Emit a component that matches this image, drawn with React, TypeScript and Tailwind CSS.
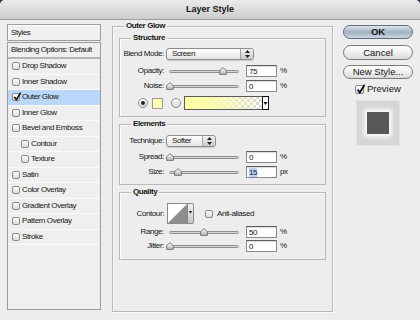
import clsx from "clsx";

type StyleItem = { label: string; checked?: boolean; active?: boolean; indent?: boolean };

const styleItems: StyleItem[] = [
  { label: "Drop Shadow" },
  { label: "Inner Shadow" },
  { label: "Outer Glow", checked: true, active: true },
  { label: "Inner Glow" },
  { label: "Bevel and Emboss" },
  { label: "Contour", indent: true },
  { label: "Texture", indent: true },
  { label: "Satin" },
  { label: "Color Overlay" },
  { label: "Gradient Overlay" },
  { label: "Pattern Overlay" },
  { label: "Stroke" },
];

function CheckBox({ checked, size = 8, className }: { checked?: boolean; size?: number; className?: string }) {
  return (
    <span
      className={clsx(
        "relative shrink-0 rounded-[2px] border border-[#8a8a8a] bg-gradient-to-b from-white to-[#dcdcdc]",
        className
      )}
      style={{ width: size, height: size }}
    >
      {checked && (
        <svg className="absolute left-[0px] top-[-2px]" width={size} height={size + 1} viewBox="0 0 10 11">
          <path d="M1.8 6.2 L4.2 9.4 L9.6 0.8" fill="none" stroke="#111" strokeWidth="2" />
        </svg>
      )}
    </span>
  );
}

function StylesPanel() {
  return (
    <div className="mt-[4px] w-[94px] h-[286px] flex flex-col text-[8px] tracking-[-0.4px]">
      <div className="h-[17px] flex items-center pl-[3px] border border-[#9d9d9d] bg-[#f0f0f0] shadow-[inset_1px_1px_0_#fff]">
        Styles
      </div>
      <div className="mt-[1px] flex-1 flex flex-col border border-[#9d9d9d] bg-[#efefef]">
        <div className="h-[16px] flex items-center pl-[3px] border-b-2 border-[#b4b4b4]">Blending Options: Default</div>
        {styleItems.map((s) => (
          <div
            key={s.label}
            className={clsx(
              "h-[15.5px] flex items-center border-b border-[#fafafa]",
              s.indent ? "pl-[13px]" : "pl-[4px]",
              s.active && "bg-[#bad6f8]"
            )}
          >
            <CheckBox checked={s.checked} />
            <span className="ml-[2px]">{s.label}</span>
          </div>
        ))}
      </div>
    </div>
  );
}

function Legend({ children }: { children: string }) {
  return <legend className="ml-[11px] px-[2px] h-[10px] leading-[10px] font-bold text-[8px] tracking-[-0.4px]">{children}</legend>;
}

function Select({ value, width }: { value: string; width: number }) {
  return (
    <div
      className="ml-[2px] h-[12px] flex items-stretch rounded-[3px] border border-[#8d8d8d] bg-gradient-to-b from-white to-[#e4e4e4] shadow-[0_1px_1px_rgba(0,0,0,0.15)]"
      style={{ width }}
    >
      <span className="flex-1 pl-[5px] leading-[10px]">{value}</span>
      <span className="w-[13px] flex items-center justify-center border-l border-[#a5a5a5] rounded-r-[3px] bg-gradient-to-b from-[#f4f4f4] to-[#c9c9c9]">
        <svg width="5" height="8" viewBox="0 0 5 8">
          <path d="M2.5 0 L5 3 H0Z M2.5 8 L5 5 H0Z" fill="#222" />
        </svg>
      </span>
    </div>
  );
}

function Slider({ thumb }: { thumb: number }) {
  return (
    <div className="relative ml-[5px] w-[70px] h-[12px] flex items-center">
      <div className="w-full h-[3px] rounded-full border border-[#8e8e8e] bg-gradient-to-b from-[#bdbdbd] to-[#f2f2f2]" />
      <svg className="absolute top-[2px]" style={{ left: thumb }} width="8" height="8" viewBox="0 0 8 8">
        <defs>
          <linearGradient id="thumbGrad" x1="0" y1="0" x2="0" y2="1">
            <stop offset="0" stopColor="#fdfdfd" />
            <stop offset="1" stopColor="#b4b4b4" />
          </linearGradient>
        </defs>
        <path d="M4 0.6 L7.4 3.6 V7.4 H0.6 V3.6 Z" fill="url(#thumbGrad)" stroke="#6e6e6e" strokeWidth="0.9" strokeLinejoin="round" />
      </svg>
    </div>
  );
}

function Field({ value, selected }: { value: string; selected?: boolean }) {
  return (
    <div className="ml-[7px] w-[31px] h-[12px] flex items-center pl-[2px] bg-white border border-[#8a8a8a] border-t-[#5e5e5e] shadow-[inset_0_1px_1px_rgba(0,0,0,0.15)]">
      <span className={clsx("leading-[9px]", selected && "bg-[#b5d5fd]")}>{value}</span>
    </div>
  );
}

function SliderRow({ label, value, unit, thumb, selected, className }: { label: string; value: string; unit: string; thumb: number; selected?: boolean; className?: string }) {
  return (
    <div className={clsx("h-[12px] flex items-center", className)}>
      <span className="w-[44px] text-right">{label}</span>
      <Slider thumb={thumb} />
      <Field value={value} selected={selected} />
      <span className="ml-[3px]">{unit}</span>
    </div>
  );
}

function Radio({ on, className }: { on?: boolean; className?: string }) {
  return (
    <span className={clsx("w-[10px] h-[10px] shrink-0 rounded-full border border-[#8a8a8a] bg-gradient-to-b from-white to-[#d8d8d8] flex items-center justify-center", className)}>
      {on && <span className="w-[4px] h-[4px] rounded-full bg-[#1e1e1e]" />}
    </span>
  );
}

function GradientBar() {
  return (
    <svg className="ml-[3px]" width="85" height="14" viewBox="0 0 85 14">
      <defs>
        <pattern id="chk" width="6" height="6" patternUnits="userSpaceOnUse">
          <rect width="6" height="6" fill="#fff" />
          <rect width="3" height="3" fill="#d9d9d9" />
          <rect x="3" y="3" width="3" height="3" fill="#d9d9d9" />
        </pattern>
        <linearGradient id="yel" x1="0" y1="0" x2="1" y2="0">
          <stop offset="0" stopColor="#ffffa4" />
          <stop offset="0.35" stopColor="#ffffa4" stopOpacity="0.85" />
          <stop offset="1" stopColor="#ffffa4" stopOpacity="0" />
        </linearGradient>
      </defs>
      <rect x="0.5" y="0.5" width="78" height="13" fill="url(#chk)" />
      <rect x="0.5" y="0.5" width="78" height="13" fill="url(#yel)" stroke="#5a5a5a" />
      <rect x="78.5" y="0.5" width="6" height="13" fill="#fff" stroke="#111" />
      <path d="M79.5 6 H83.5 L81.5 9 Z" fill="#111" />
    </svg>
  );
}

function ContourPicker() {
  return (
    <svg className="ml-[3px]" width="27" height="21" viewBox="0 0 27 21">
      <defs>
        <linearGradient id="segGrad" x1="0" y1="0" x2="0" y2="1">
          <stop offset="0" stopColor="#f5f5f5" />
          <stop offset="1" stopColor="#c4c4c4" />
        </linearGradient>
      </defs>
      <rect x="0.5" y="0.5" width="20" height="20" fill="#fff" stroke="#8a8a8a" />
      <path d="M1 20 L20 1 V20 Z" fill="#8e8e8e" />
      <rect x="20.5" y="0.5" width="6" height="20" rx="1.5" fill="url(#segGrad)" stroke="#8a8a8a" />
      <path d="M21.8 8 H25.2 L23.5 10.6 Z" fill="#111" />
    </svg>
  );
}

function OuterGlow() {
  return (
    <fieldset className="mt-[1px] ml-[11px] w-[221px] h-[291px] border border-[#b9b9b9] shadow-[1px_1px_0_#fafafa,inset_1px_1px_0_#fafafa] text-[8px] tracking-[-0.4px]">
      <Legend>Outer Glow</Legend>
      <div className="px-[6px] flex flex-col">
        <fieldset className="mt-[2px] border border-[#b9b9b9] shadow-[inset_1px_1px_0_#fafafa]">
          <Legend>Structure</Legend>
          <div className="pt-[5px] pb-[6px] flex flex-col">
            <div className="h-[12px] flex items-center">
              <span className="w-[44px] text-right">Blend Mode:</span>
              <Select value="Screen" width={88} />
            </div>
            <SliderRow className="mt-[5px]" label="Opacity:" value="75" unit="%" thumb={50} />
            <SliderRow className="mt-[3px]" label="Noise:" value="0" unit="%" thumb={-3} />
            <div className="mt-[4px] h-[14px] flex items-center">
              <Radio on className="ml-[18px]" />
              <span className="ml-[4px] w-[11px] h-[11px] bg-[#ffffb4] border border-[#9a9a9a]" />
              <Radio className="ml-[8px]" />
              <GradientBar />
            </div>
          </div>
        </fieldset>

        <fieldset className="mt-[2px] border border-[#b9b9b9] shadow-[inset_1px_1px_0_#fafafa]">
          <Legend>Elements</Legend>
          <div className="pt-[6px] pb-[6px] flex flex-col">
            <div className="h-[12px] flex items-center">
              <span className="w-[44px] text-right">Technique:</span>
              <Select value="Softer" width={50} />
            </div>
            <SliderRow className="mt-[4px]" label="Spread:" value="0" unit="%" thumb={-3} />
            <SliderRow className="mt-[3px]" label="Size:" value="15" unit="px" thumb={5} selected />
          </div>
        </fieldset>

        <fieldset className="mt-[2px] border border-[#b9b9b9] shadow-[inset_1px_1px_0_#fafafa]">
          <Legend>Quality</Legend>
          <div className="pt-[6px] pb-[7px] flex flex-col">
            <div className="h-[21px] flex items-center">
              <span className="w-[44px] text-right">Contour:</span>
              <ContourPicker />
              <CheckBox className="ml-[11px]" />
              <span className="ml-[4px]">Anti-aliased</span>
            </div>
            <SliderRow className="mt-[2px]" label="Range:" value="50" unit="%" thumb={31} />
            <SliderRow className="mt-[2px]" label="Jitter:" value="0" unit="%" thumb={-3} />
          </div>
        </fieldset>
      </div>
    </fieldset>
  );
}

function AquaButton({ children, primary, className }: { children: string; primary?: boolean; className?: string }) {
  return (
    <div
      className={clsx(
        "w-full h-[14px] flex items-center justify-center rounded-full border text-[9.5px] leading-none",
        primary
          ? "border-[#5f6e80] bg-gradient-to-b from-[#dfe6ee] via-[#a3b2c3] to-[#cbd5e0] font-bold"
          : "border-[#7a7a7a] bg-gradient-to-b from-white via-[#efefef] to-[#dadada]",
        className
      )}
    >
      {children}
    </div>
  );
}

function RightColumn() {
  return (
    <div className="mt-[5px] ml-[10px] w-[70px] flex flex-col">
      <AquaButton primary>OK</AquaButton>
      <AquaButton className="mt-[6px] h-[15px]">Cancel</AquaButton>
      <AquaButton className="mt-[5px]">New Style...</AquaButton>
      <div className="mt-[5px] ml-[12px] h-[10px] flex items-center">
        <CheckBox checked size={9} />
        <span className="ml-[3px] text-[9.5px]">Preview</span>
      </div>
      <div className="mt-[6px] ml-[13px] w-[44px] h-[46px] flex items-center justify-center bg-[#d6d6d6] border border-[#e2e2e2]">
        <div className="w-[22px] h-[22px] bg-[#575757] shadow-[0_0_4px_3px_rgba(255,255,255,0.85)]" />
      </div>
    </div>
  );
}

export default function App() {
  return (
    <div className="w-[420px] h-[320px] bg-[#2a3142] font-['Liberation_Sans',Arial,sans-serif] text-[#151515]">
      <div className="w-full h-full flex flex-col overflow-hidden rounded-t-[5px] bg-[#ededed]">
        <div className="h-[20px] shrink-0 flex items-center justify-center border-b border-[#9a9a9a] bg-gradient-to-b from-[#ebebeb] to-[#cdcdcd] text-[9px] font-bold">
          Layer Style
        </div>
        <div className="flex items-start pl-[7px]">
          <StylesPanel />
          <OuterGlow />
          <RightColumn />
        </div>
      </div>
    </div>
  );
}
